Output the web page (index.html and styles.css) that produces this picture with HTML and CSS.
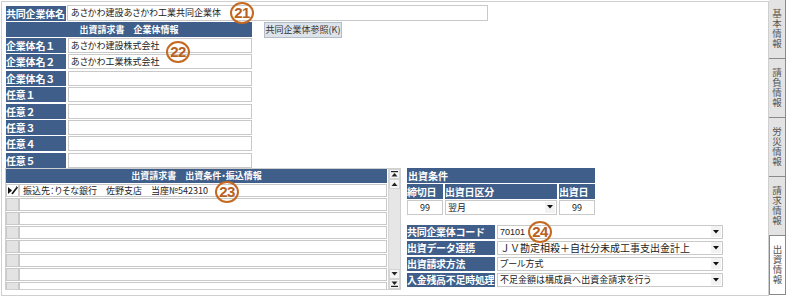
FILE: index.html
```html
<!DOCTYPE html>
<html lang="ja">
<head>
<meta charset="utf-8">
<link rel="stylesheet" href="styles.css">
</head>
<body>
<div class="screen">
  <div class="main">
    <div class="row-top">
      <div class="lbl lbl-top">共同企業体名</div>
      <div class="inp inp-top">あさかわ建設あさかわ工業共同企業体</div>
    </div>
    <div class="row-mid">
      <div class="corp">
        <div class="hdr">出資請求書　企業体情報</div>
        <div class="frows">
          <div class="frow"><div class="lbl">企業体名１</div><div class="inp">あさかわ建設株式会社</div></div>
          <div class="frow"><div class="lbl">企業体名２</div><div class="inp">あさかわ工業株式会社</div></div>
          <div class="frow"><div class="lbl">企業体名３</div><div class="inp"></div></div>
          <div class="frow"><div class="lbl">任意１</div><div class="inp"></div></div>
          <div class="frow"><div class="lbl">任意２</div><div class="inp"></div></div>
          <div class="frow"><div class="lbl">任意３</div><div class="inp"></div></div>
          <div class="frow"><div class="lbl">任意４</div><div class="inp"></div></div>
          <div class="frow"><div class="lbl">任意５</div><div class="inp"></div></div>
        </div>
      </div>
      <div class="btn">共同企業体参照(K)</div>
    </div>
    <div class="row-bot">
      <div class="grid-box">
        <div class="grid">
          <div class="ghdr">出資請求書　出資条件・振込情報</div>
          <div class="grow">
            <div class="rh rh-cur"><svg width="10" height="9" viewBox="0 0 10 9"><path d="M0 1 L4 4.5 L0 8 Z" fill="#111"/><path d="M4 8 L9 1.5" stroke="#111" stroke-width="1.6"/><path d="M8.2 0.6 L9.8 1.8" stroke="#111" stroke-width="1"/></svg></div>
            <div class="gc">振込先：りそな銀行　佐野支店　当座№542310</div>
          </div>
          <div class="grow"><div class="rh"></div><div class="gc"></div></div>
          <div class="grow"><div class="rh"></div><div class="gc"></div></div>
          <div class="grow"><div class="rh"></div><div class="gc"></div></div>
          <div class="grow"><div class="rh"></div><div class="gc"></div></div>
          <div class="grow"><div class="rh"></div><div class="gc"></div></div>
          <div class="grow"><div class="rh"></div><div class="gc"></div></div>
          <div class="grow grow-cut"><div class="rh"></div><div class="gc"></div></div>
        </div>
        <div class="vscroll">
          <div class="sb"><svg width="7" height="6" viewBox="0 0 7 6"><rect x="0" y="0" width="7" height="1.2" fill="#222"/><path d="M0.5 5.5 L3.5 2 L6.5 5.5 Z" fill="#222"/></svg></div>
          <div class="sb"><svg width="7" height="4" viewBox="0 0 7 4"><path d="M0.5 4 L3.5 0.5 L6.5 4 Z" fill="#222"/></svg></div>
          <div class="track"></div>
          <div class="sb"><svg width="7" height="4" viewBox="0 0 7 4"><path d="M0.5 0 L3.5 3.5 L6.5 0 Z" fill="#222"/></svg></div>
          <div class="sb"><svg width="7" height="6" viewBox="0 0 7 6"><path d="M0.5 0.5 L3.5 4 L6.5 0.5 Z" fill="#222"/><rect x="0" y="4.8" width="7" height="1.2" fill="#222"/></svg></div>
        </div>
      </div>
      <div class="right">
        <div class="cond">
          <div class="chdr">出資条件</div>
          <div class="crow">
            <div class="lbl c1">締切日</div>
            <div class="lbl c2">出資日区分</div>
            <div class="lbl c3">出資日</div>
          </div>
          <div class="crow">
            <div class="cell c1 center">99</div>
            <div class="cell c2 sel"><span>翌月</span><span class="dd"><svg width="6" height="4" viewBox="0 0 6 4"><path d="M0 0 L6 0 L3 3.5 Z" fill="#111"/></svg></span></div>
            <div class="cell c3 center">99</div>
          </div>
        </div>
        <div class="jv">
          <div class="jrow"><div class="lbl jl">共同企業体コード</div><div class="cell jv-val sel"><span class="code">70101</span><span class="dd"><svg width="6" height="4" viewBox="0 0 6 4"><path d="M0 0 L6 0 L3 3.5 Z" fill="#111"/></svg></span></div></div>
          <div class="jrow"><div class="lbl jl">出資データ連携</div><div class="cell jv-val sel"><span class="full">ＪＶ勘定相殺＋自社分未成工事支出金計上</span><span class="dd"><svg width="6" height="4" viewBox="0 0 6 4"><path d="M0 0 L6 0 L3 3.5 Z" fill="#111"/></svg></span></div></div>
          <div class="jrow"><div class="lbl jl">出資請求方法</div><div class="cell jv-val sel"><span>プール方式</span><span class="dd"><svg width="6" height="4" viewBox="0 0 6 4"><path d="M0 0 L6 0 L3 3.5 Z" fill="#111"/></svg></span></div></div>
          <div class="jrow"><div class="lbl jl">入金残高不足時処理</div><div class="cell jv-val sel"><span>不足金額は構成員へ出資金請求を行う</span><span class="dd"><svg width="6" height="4" viewBox="0 0 6 4"><path d="M0 0 L6 0 L3 3.5 Z" fill="#111"/></svg></span></div></div>
        </div>
      </div>
    </div>
    <div class="mark m21">21</div>
    <div class="mark m22">22</div>
    <div class="mark m23">23</div>
    <div class="mark m24">24</div>
  </div>
  <div class="tabs">
    <div class="tab">基本情報</div>
    <div class="tab">請負情報</div>
    <div class="tab">労災情報</div>
    <div class="tab">請求情報</div>
    <div class="tab tab-on">出資情報</div>
  </div>
</div>
</body>
</html>
```

FILE: styles.css
```css
* { box-sizing: border-box; }
html, body { margin: 0; padding: 0; background: #fff; }
body {
  font-family: "Noto Sans CJK JP", "Noto Sans", sans-serif;
  font-size: 9px;
  font-feature-settings: "palt";
  color: #222;
  width: 786px;
  height: 299px;
  overflow: hidden;
}
.screen { display: flex; align-items: flex-start; }
.main {
  position: relative;
  margin: 1px 0 0 1px;
  width: 768px;
  height: 295px;
  border: 1px solid #cfcfcf;
  padding: 3px 0 0 4px;
}
.lbl {
  background: #3f5f8a;
  color: #fff;
  font-weight: bold;
  font-size: 10px;
  font-feature-settings: normal;
  height: 15px;
  line-height: 15px;
  padding-left: 0;
  white-space: nowrap;
  overflow: hidden;
  letter-spacing: -0.2px;
}
.inp, .cell {
  background: #fff;
  border: 1px solid #c9c9c9;
  height: 15px;
  line-height: 13px;
  padding-left: 2px;
  white-space: nowrap;
  overflow: hidden;
}
.row-top { display: flex; gap: 1px; height: 16px; }
.lbl-top { width: 60px; margin-top: 1px; }
.inp-top { width: 421px; height: 16px; line-height: 14px; padding-left: 3px; }

.row-mid { display: flex; align-items: flex-start; margin-top: 1px; }
.corp { width: 246px; }
.hdr {
  background: #3f5f8a;
  color: #fff;
  font-weight: bold;
  text-align: center;
  height: 15px;
  line-height: 15px;
}
.frows { display: flex; flex-direction: column; gap: 1.4px; margin-top: 1px; }
.frow { display: flex; gap: 2px; }
.frow .lbl { width: 60px; }
.frow .inp { width: 184px; }
.btn {
  margin-left: 12px;
  width: 78px;
  height: 16px;
  line-height: 14px;
  background: #dde3ea;
  border: 1px solid #b4bcc7;
  font-size: 9px;
  color: #333;
  text-align: center;
  white-space: nowrap;
}

.row-bot { display: flex; align-items: flex-start; margin-left: -1px; }
.grid-box {
  width: 396px;
  height: 122px;
  border: 1px solid #cfcfcf;
  display: flex;
  gap: 1px;
  overflow: hidden;
}
.grid { width: 381px; display: flex; flex-direction: column; }
.ghdr {
  background: #3f5f8a;
  color: #fff;
  font-weight: bold;
  text-align: center;
  height: 14px;
  line-height: 14px;
  flex: none;
}
.grow { display: flex; height: 13px; margin-top: 1px; flex: none; }
.rh {
  width: 13px;
  background: #e3e3e3;
  border: 1px solid #c9c9c9;
  display: flex;
  align-items: center;
  justify-content: center;
}
.rh-cur { background: #fff; }
.gc {
  flex: 1;
  border: 1px solid #c9c9c9;
  background: #fff;
  line-height: 11px;
  padding-left: 3px;
  white-space: nowrap;
}
.vscroll {
  width: 12px;
  display: flex;
  flex-direction: column;
  background: #e9e9e9;
  border-left: 1px solid #d6d6d6;
}
.sb {
  height: 10px;
  background: #f4f4f4;
  border: 1px solid #d4d4d4;
  display: flex;
  align-items: center;
  justify-content: center;
  flex: none;
}
.track { flex: 1; background: #e6e6e6; }

.right { margin-left: 6px; }
.cond { width: 188px; }
.chdr {
  background: #3f5f8a;
  color: #fff;
  font-weight: bold;
  font-size: 10px;
  height: 15px;
  line-height: 15px;
  padding-left: 1px;
}
.crow { display: flex; gap: 2px; margin-top: 1px; }
.c1 { width: 36px; }
.c2 { width: 112px; }
.c3 { width: 36px; }
.center { text-align: center; padding-left: 0; }
.sel { display: flex; justify-content: space-between; align-items: center; padding-right: 1px; }
.dd {
  width: 10px;
  height: 11px;
  background: #f2f2f2;
  display: flex;
  align-items: center;
  justify-content: center;
  flex: none;
}
.jv { margin-top: 10px; display: flex; flex-direction: column; gap: 2px; }
.jrow { display: flex; gap: 2px; }
.jl { width: 88px; height: 14px; line-height: 14px; letter-spacing: -0.3px; }
.jv-val { width: 226px; height: 14px; line-height: 12px; }
.full { font-feature-settings: normal; font-size: 10px; }
.code { font-family: "Liberation Sans", sans-serif; font-size: 9px; }

.mark {
  position: absolute;
  width: 24px;
  height: 22px;
  border: 2px solid #c4691f;
  border-radius: 50%;
  color: #b8601c;
  font-family: "Liberation Sans", sans-serif;
  font-weight: bold;
  font-size: 15px;
  line-height: 18px;
  text-align: center;
  letter-spacing: -0.5px;
}
.m21 { left: 228px; top: 0px; }
.m22 { left: 164px; top: 39px; }
.m23 { left: 213px; top: 179px; }
.m24 { left: 526px; top: 219px; }

.tabs { width: 17px; display: flex; flex-direction: column; }
.tab {
  height: 59px;
  background: #e3e3e3;
  border-right: 1px solid #8a8a8a;
  border-bottom: 1px solid #8a8a8a;
  color: #555;
  font-size: 9.5px;
  font-feature-settings: normal;
  writing-mode: vertical-rl;
  text-orientation: upright;
  display: flex;
  align-items: center;
  justify-content: center;
  letter-spacing: 0.5px;
}
.tab-on { background: #fff; border-left: 1px solid #8a8a8a; }
```
